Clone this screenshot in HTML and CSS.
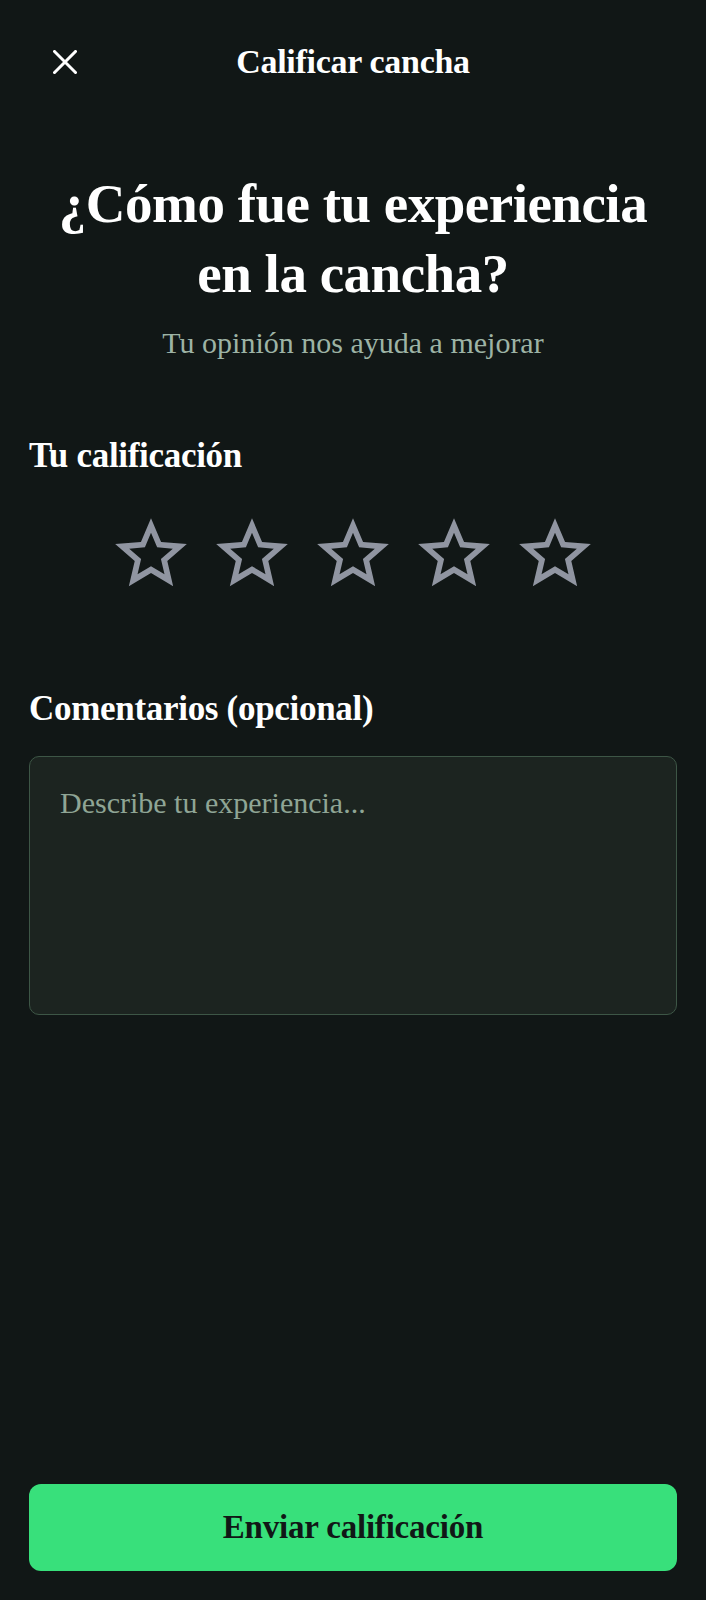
FILE: index.html
```html
<!DOCTYPE html>
<html lang="es">
<head>
<meta charset="utf-8">
<title>Calificar cancha</title>
<link rel="stylesheet" href="styles.css">
</head>
<body>
<div class="screen">
  <header class="topbar">
    <button class="close" aria-label="Cerrar">
      <svg viewBox="0 0 24 24" width="24" height="24"><path d="M1.5 1.5 L22.5 22.5 M22.5 1.5 L1.5 22.5" stroke="#ffffff" stroke-width="3" stroke-linecap="square" fill="none"/></svg>
    </button>
    <h1 class="topbar-title">Calificar cancha</h1>
    <span class="topbar-spacer"></span>
  </header>

  <main class="content">
    <h2 class="question">¿Cómo fue tu experiencia<br>en la cancha?</h2>
    <p class="subtitle">Tu opinión nos ayuda a mejorar</p>

    <h3 class="label rating-label">Tu calificación</h3>
    <div class="stars">
      <svg class="star" viewBox="0 0 24 24"><path d="M22 9.24l-7.19-.62L12 2 9.19 8.63 2 9.24l5.46 4.73L5.82 21 12 17.270 18.18 21l-1.63-7.03L22 9.24zM12 15.4l-3.76 2.27 1-4.28-3.32-2.88 4.38-.38L12 6.1l1.71 4.04 4.38.38-3.32 2.88 1 4.28L12 15.4z"/></svg>
      <svg class="star" viewBox="0 0 24 24"><path d="M22 9.24l-7.19-.62L12 2 9.19 8.63 2 9.24l5.46 4.73L5.82 21 12 17.27 18.18 21l-1.63-7.03L22 9.24zM12 15.4l-3.76 2.27 1-4.28-3.32-2.88 4.38-.38L12 6.1l1.71 4.04 4.38.38-3.32 2.88 1 4.28L12 15.4z"/></svg>
      <svg class="star" viewBox="0 0 24 24"><path d="M22 9.24l-7.19-.62L12 2 9.19 8.63 2 9.24l5.46 4.73L5.82 21 12 17.27 18.18 21l-1.63-7.03L22 9.24zM12 15.4l-3.76 2.27 1-4.28-3.32-2.88 4.38-.38L12 6.1l1.71 4.04 4.38.38-3.32 2.88 1 4.28L12 15.4z"/></svg>
      <svg class="star" viewBox="0 0 24 24"><path d="M22 9.24l-7.19-.62L12 2 9.19 8.63 2 9.24l5.46 4.73L5.82 21 12 17.27 18.18 21l-1.63-7.03L22 9.24zM12 15.4l-3.76 2.27 1-4.28-3.32-2.88 4.38-.38L12 6.1l1.71 4.04 4.38.38-3.32 2.88 1 4.28L12 15.4z"/></svg>
      <svg class="star" viewBox="0 0 24 24"><path d="M22 9.24l-7.19-.62L12 2 9.19 8.63 2 9.24l5.46 4.73L5.82 21 12 17.27 18.18 21l-1.63-7.03L22 9.24zM12 15.4l-3.76 2.27 1-4.28-3.32-2.88 4.38-.38L12 6.1l1.71 4.04 4.38.38-3.32 2.88 1 4.28L12 15.4z"/></svg>
    </div>

    <h3 class="label comments-label">Comentarios (opcional)</h3>
    <textarea class="comments" placeholder="Describe tu experiencia..."></textarea>
  </main>

  <footer class="footer">
    <button class="submit">Enviar calificación</button>
  </footer>
</div>
</body>
</html>
```

FILE: styles.css
```css
* { box-sizing: border-box; }

html, body {
  margin: 0;
  padding: 0;
  background: #111716;
}

body {
  font-family: "Liberation Serif", "DejaVu Serif", serif;
  color: #ffffff;
}

.screen {
  min-height: 100vh;
  display: flex;
  flex-direction: column;
}

.topbar {
  height: 124px;
  display: grid;
  grid-template-columns: 77px 1fr 77px;
  align-items: center;
  padding: 0 0 0 53px;
}

.close {
  width: 24px;
  height: 24px;
  padding: 0;
  border: 0;
  background: transparent;
  display: flex;
}

.topbar-title {
  grid-column: 2;
  margin: 0 0 0 -53px;
  text-align: center;
  font-size: 34px;
  line-height: 40px;
  font-weight: 700;
  letter-spacing: -0.3px;
}

.topbar-spacer { width: 0; }

.content {
  padding: 0 29px;
  display: flex;
  flex-direction: column;
}

.question {
  margin: 45px 0 0;
  text-align: center;
  font-size: 55px;
  line-height: 70px;
  font-weight: 700;
  letter-spacing: -0.5px;
}

.subtitle {
  margin: 16px 0 0;
  text-align: center;
  font-size: 30px;
  line-height: 36px;
  color: #9db3a5;
}

.label {
  margin: 0;
  font-size: 35px;
  line-height: 40px;
  font-weight: 700;
  letter-spacing: -0.3px;
}

.rating-label { margin-top: 75px; }

.stars {
  margin-top: 35px;
  display: flex;
  justify-content: center;
  gap: 15px;
}

.star {
  width: 86px;
  height: 86px;
  fill: #9095a1;
}

.comments-label { margin-top: 92px; }

.comments {
  margin-top: 27px;
  height: 259px;
  width: 100%;
  resize: none;
  background: #1c2420;
  border: 1.5px solid #3d5646;
  border-radius: 10px;
  padding: 28px 30px;
  font-family: "Liberation Serif", "DejaVu Serif", serif;
  font-size: 30px;
  line-height: 36px;
  color: #ffffff;
  outline: none;
}

.comments::placeholder { color: #8fa595; }

.footer {
  margin-top: auto;
  padding: 0 29px 29px;
}

.submit {
  width: 100%;
  height: 87px;
  border: 0;
  border-radius: 12px;
  background: #38e07b;
  color: #111716;
  font-family: "Liberation Serif", "DejaVu Serif", serif;
  font-size: 33px;
  font-weight: 700;
  letter-spacing: -0.2px;
}
```
